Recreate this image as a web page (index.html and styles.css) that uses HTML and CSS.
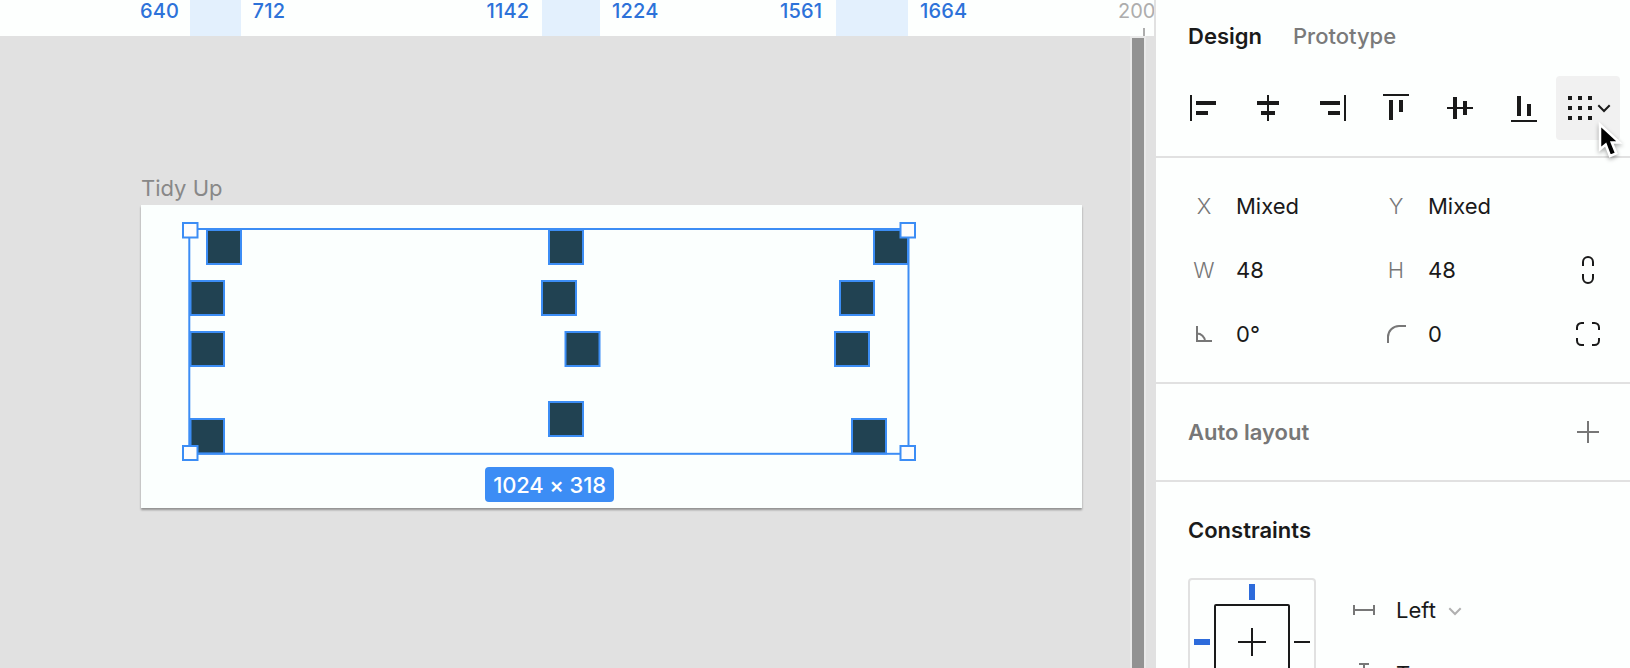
FILE: index.html
```html
<!DOCTYPE html>
<html lang="en">
<head>
<meta charset="utf-8">
<title>Tidy Up</title>
<link rel="stylesheet" href="styles.css">
</head>
<body>
<div class="app">
  <main class="workspace">
    <div class="ruler">
      <span class="band band-a"></span><span class="band band-b"></span><span class="band band-c"></span>
      <span class="mark m640">640</span><span class="mark m712">712</span>
      <span class="mark m1142">1142</span><span class="mark m1224">1224</span>
      <span class="mark m1561">1561</span><span class="mark m1664">1664</span>
      <span class="mark m2000">200</span><span class="tick"></span>
    </div>
    <div class="canvas">
      <div class="frame-label">Tidy Up</div>
      <div class="frame"></div>
      <svg class="selection" width="1154" height="632" viewBox="0 36 1154 632">
        <g class="items">
          <rect x="207" y="230" width="34" height="34"/>
          <rect x="190.500" y="281" width="33.500" height="34"/>
          <rect x="190.500" y="332" width="33.500" height="34"/>
          <rect x="190.500" y="419" width="33.500" height="34.500"/>
          <rect x="549" y="230" width="34" height="34"/>
          <rect x="542" y="281" width="34" height="34"/>
          <rect x="565.500" y="332" width="34" height="34"/>
          <rect x="549" y="402" width="34" height="34"/>
          <rect x="874" y="230" width="34" height="34"/>
          <rect x="840" y="281" width="34" height="34"/>
          <rect x="835" y="332" width="34" height="34"/>
          <rect x="852" y="419" width="34" height="34.500"/>
        </g>
        <rect class="bounds" x="189.300" y="229" width="719.200" height="224.800"/>
        <g class="handles">
          <rect x="183" y="223" width="14.500" height="14.500"/>
          <rect x="900.500" y="223" width="14.500" height="14.500"/>
          <rect x="183" y="446" width="14.500" height="14"/>
          <rect x="900.500" y="446" width="14.500" height="14"/>
        </g>
      </svg>
      <div class="size-badge">1024 × 318</div>
      <div class="scrollbar"></div>
    </div>
  </main>

  <aside class="panel">
    <section class="top">
      <nav class="tabs"><span class="tab active">Design</span><span class="tab">Prototype</span></nav>
      <div class="align-row">
        <svg class="tool" viewBox="0 0 64 64"><path d="M18 19h2v26h-2zM24 25h20v4H24zM24 35h12v4H24z"/></svg>
        <svg class="tool" viewBox="0 0 64 64"><path d="M31 19h2v26h-2zM21 25h22v4H21zM25 35h14v4H25z"/></svg>
        <svg class="tool" viewBox="0 0 64 64"><path d="M20 25h20v4H20zM28 35h12v4H28zM44 19h2v26h-2z"/></svg>
        <svg class="tool" viewBox="0 0 64 64"><path d="M19 18h26v2H19zM25 24h4v20h-4zM35 24h4v12h-4z"/></svg>
        <svg class="tool" viewBox="0 0 64 64"><path d="M19 31h26v2H19zM25 21h4v22h-4zM35 25h4v14h-4z"/></svg>
        <svg class="tool" viewBox="0 0 64 64"><path d="M19 44h26v2H19zM25 20h4v20h-4zM35 28h4v12h-4z"/></svg>
        <svg class="tool hover" viewBox="0 0 64 64"><path d="M12 20h4v4h-4zM22 20h4v4h-4zM32 20h4v4h-4zM12 30h4v4h-4zM22 30h4v4h-4zM32 30h4v4h-4zM12 40h4v4h-4zM22 40h4v4h-4zM32 40h4v4h-4z"/><path class="stroke" d="M42.300 29.300L48 35l5.700-5.700"/></svg>
      </div>
    </section>

    <section class="props">
      <span class="key">X</span><span class="value">Mixed</span>
      <span class="key">Y</span><span class="value">Mixed</span><span></span>
      <span class="key">W</span><span class="value">48</span>
      <span class="key">H</span><span class="value">48</span>
      <svg class="prop-icon" viewBox="0 0 32 32"><path class="stroke" d="M11 12V8a5 5 0 0 1 10 0v4M11 20v4a5 5 0 0 0 10 0v-4"/></svg>
      <svg class="prop-icon muted" viewBox="0 0 32 32"><path class="stroke" d="M9 8v15h15M9 15.500a8 8 0 0 1 8 7.500"/></svg><span class="value">0°</span>
      <svg class="prop-icon muted" viewBox="0 0 32 32"><path class="stroke" d="M8 25v-6A11 11 0 0 1 19 8h7"/></svg><span class="value">0</span>
      <svg class="prop-icon" viewBox="0 0 32 32"><path class="stroke" d="M5 12V9.500A4.500 4.500 0 0 1 9.500 5H12M20 5h2.500A4.500 4.500 0 0 1 27 9.500V12M27 20v2.500a4.500 4.500 0 0 1-4.500 4.500H20M12 27H9.500A4.500 4.500 0 0 1 5 22.500V20"/></svg>
    </section>

    <section class="auto">
      <span class="heading dim">Auto layout</span>
      <svg class="prop-icon muted" viewBox="0 0 32 32"><path class="stroke" d="M5 16h22M16 5v22"/></svg>
    </section>

    <section class="constraints">
      <h2 class="heading">Constraints</h2>
      <div class="constraint-body">
        <svg class="pinbox" width="128" height="128" viewBox="0 0 128 128">
          <rect x="1" y="1" width="126" height="126" rx="3" fill="none" stroke="#e1e1e1" stroke-width="2"/>
          <rect x="27" y="27" width="74" height="74" rx="1" fill="none" stroke="#1a1a1a" stroke-width="2"/>
          <path fill="#2d6bdb" d="M61 6h6v16h-6zM6 61h16v6H6z"/>
          <path fill="#1a1a1a" d="M50 63h28v2H50zM63 50h2v28h-2zM106 63h16v2h-16zM63 106h2v16h-2z"/>
        </svg>
        <div class="choices">
          <div class="choice">
            <svg class="prop-icon muted" viewBox="0 0 32 32"><path class="stroke" d="M6 11v10M26 11v10M6 16h20"/></svg>
            <span>Left</span>
            <svg class="chevron" viewBox="0 0 16 16"><path class="stroke" d="M2.300 5.300L8 11l5.700-5.700"/></svg>
          </div>
          <div class="choice">
            <svg class="prop-icon muted" viewBox="0 0 32 32"><path class="stroke" d="M11 6h10M11 26h10M16 6v20"/></svg>
            <span>Top</span>
            <svg class="chevron" viewBox="0 0 16 16"><path class="stroke" d="M2.300 5.300L8 11l5.700-5.700"/></svg>
          </div>
        </div>
      </div>
    </section>
  </aside>

  <svg class="cursor" width="30" height="44" viewBox="0 0 30 44">
    <path d="M5 4.500v24.800l5.700-4.800 4.300 11.500 6.300-2.600L16.800 22.500H24.500z"/>
  </svg>
</div>
</body>
</html>
```
FILE: styles.css
```css
* { box-sizing: border-box; }

body {
  margin: 0;
  font-family: Inter, "Liberation Sans", sans-serif;
  font-size: 22px;
  color: #1a1a1a;
  overflow: hidden;
}

.app {
  position: relative;
  display: flex;
  width: 1630px;
  height: 668px;
  overflow: hidden;
}

.workspace {
  width: 1154px;
  display: flex;
  flex-direction: column;
}

.ruler {
  position: relative;
  height: 36px;
  background: #fdfffe;
  overflow: hidden;
}

.band { position: absolute; top: 0; height: 36px; background: #e3f0fd; }
.band-a { left: 190px; width: 51px; }
.band-b { left: 542px; width: 57.500px; }
.band-c { left: 835.500px; width: 72px; }

.mark {
  position: absolute;
  top: -1px;
  font-size: 20px;
  line-height: 24px;
  color: #2d72d9;
  font-weight: 450;
  letter-spacing: 0.200px;
}
.m640 { left: 140px; }
.m712 { left: 252.500px; }
.m1142 { left: 486.500px; }
.m1224 { left: 612px; }
.m1561 { left: 780px; }
.m1664 { left: 920px; }
.m2000 { left: 1118px; color: #adadad; font-weight: 400; letter-spacing: 0; }

.tick { position: absolute; left: 1143px; top: 28px; width: 2px; height: 8px; background: #adadad; }

.canvas { position: relative; flex: 1; background: #e1e1e1; }

.frame-label {
  position: absolute;
  left: 141px;
  top: 138px;
  line-height: 28px;
  color: #888;
}

.frame {
  position: absolute;
  left: 141px;
  top: 169px;
  width: 941px;
  height: 303px;
  background: #fbfffe;
  box-shadow: 0 2px 2px rgba(0, 0, 0, 0.360);
}

.selection { position: absolute; left: 0; top: 0; }
.items rect { fill: #214252; stroke: #3c8df5; stroke-width: 2; }
.bounds { fill: none; stroke: #3c8df5; stroke-width: 2; }
.handles rect { fill: #fdfdfd; stroke: #3c8df5; stroke-width: 2; }

.size-badge {
  position: absolute;
  left: 485px;
  top: 431px;
  width: 129px;
  height: 35px;
  border-radius: 4px;
  background: #3c8df5;
  color: #fff;
  font-weight: 500;
  line-height: 36px;
  text-align: center;
  letter-spacing: -0.150px;
  white-space: nowrap;
}

.scrollbar {
  position: absolute;
  left: 1130px;
  top: 0;
  width: 16px;
  height: 632px;
  background: #929292;
  border: solid #e9e9e9;
  border-width: 2px 2px 0;
}

.panel {
  width: 476px;
  height: 668px;
  background: #fdfffe;
  border-left: 2px solid #e1e1e1;
  overflow: hidden;
}

section { border-bottom: 2px solid #e1e1e1; }

.top { height: 158px; padding: 20px 10px 0 16px; }

.tabs { display: flex; gap: 31px; height: 56px; padding-left: 16px; line-height: 32px; }
.tab { color: #7a7a7a; font-weight: 500; }
.tab.active { color: #1a1a1a; font-weight: 600; }

.align-row { display: flex; }
.tool { width: 64px; height: 64px; fill: #1a1a1a; color: #1a1a1a; }
.tool.hover { background: #f1f1f1; border-radius: 4px; }

.tool .stroke, .stroke { fill: none; stroke: currentColor; stroke-width: 2; }

.props {
  display: grid;
  grid-template-columns: 32px 160px 32px 160px 32px;
  grid-auto-rows: 64px;
  align-items: center;
  height: 226px;
  padding: 16px 26px 0 32px;
}
.key { text-align: center; color: #777; font-weight: 300; }
.value { padding-left: 16px; }

.prop-icon { width: 32px; height: 32px; flex: none; color: #1a1a1a; }
.muted { color: #777; }

.auto {
  display: flex;
  align-items: center;
  justify-content: space-between;
  height: 98px;
  padding: 0 26px 0 32px;
}
.heading { margin: 0; font-size: 22px; font-weight: 600; line-height: 32px; }
.dim { color: #777; }

.constraints { padding: 32px 32px 40px; border-bottom: 0; }
.constraint-body { display: flex; margin-top: 32px; gap: 32px; }
.choice { display: flex; align-items: center; height: 64px; }
.choice span { margin: 0 11px 0 16px; }
.chevron { width: 16px; height: 16px; color: #b0b0b0; margin-top: 2px; }

.cursor { position: absolute; left: 1595px; top: 120px; filter: drop-shadow(0 2px 2px rgba(0, 0, 0, 0.350)); }
.cursor path { fill: #000; stroke: #fff; stroke-width: 2.500; }
```
